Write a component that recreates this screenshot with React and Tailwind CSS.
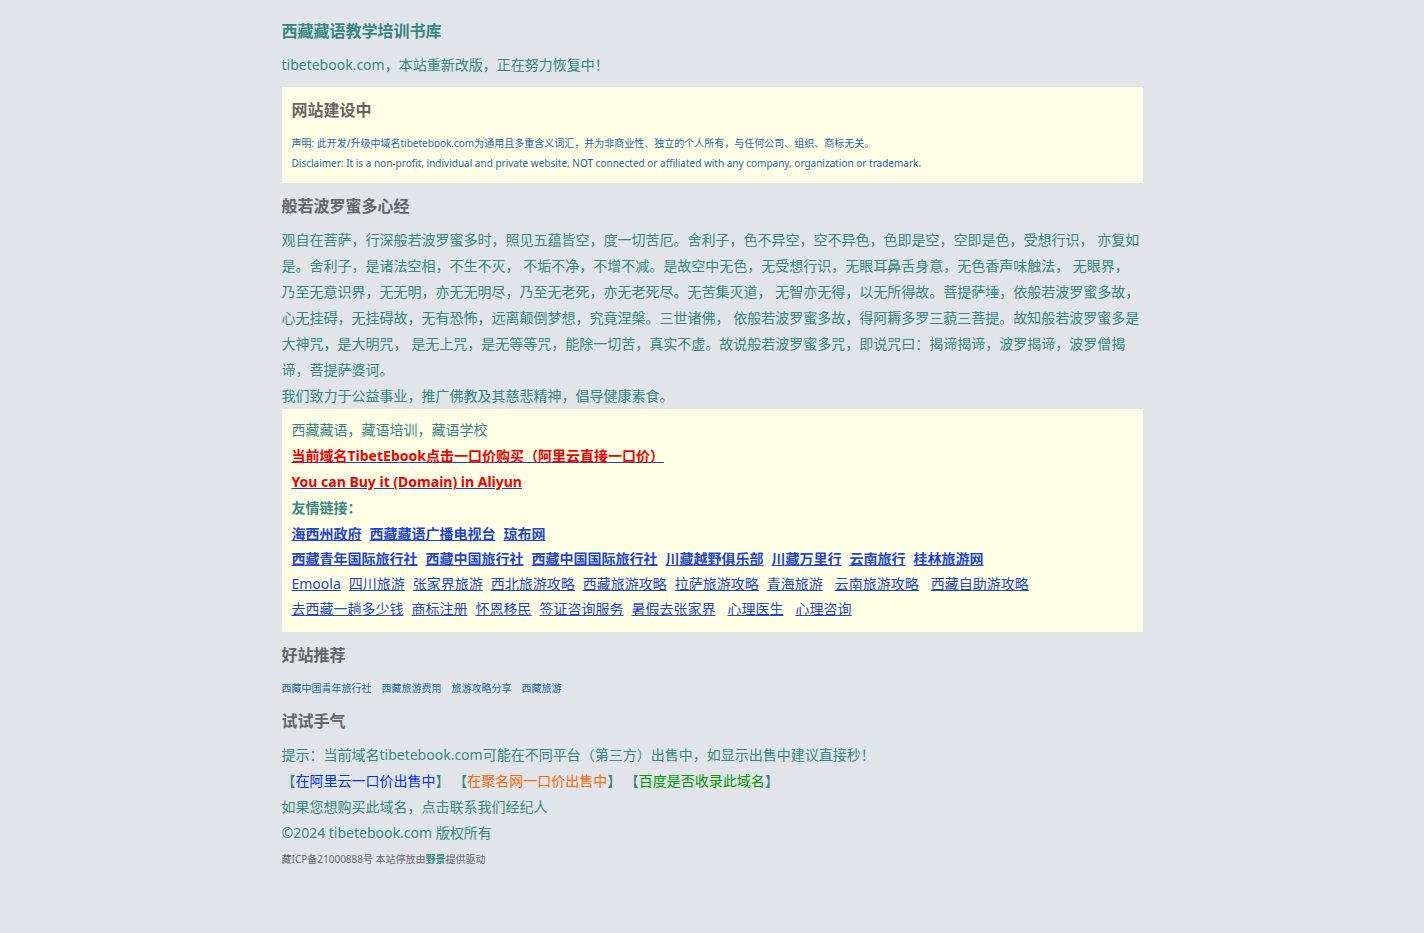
const boldLinks = [
  ['海西州政府', '西藏藏语广播电视台', '琼布网'],
  ['西藏青年国际旅行社', '西藏中国旅行社', '西藏中国国际旅行社', '川藏越野俱乐部', '川藏万里行', '云南旅行', '桂林旅游网'],
];

const links = [
  [
    { name: 'Emoola' },
    { name: '四川旅游' },
    { name: '张家界旅游' },
    { name: '西北旅游攻略' },
    { name: '西藏旅游攻略' },
    { name: '拉萨旅游攻略' },
    { name: '青海旅游' },
    { name: '云南旅游攻略', wide: true },
    { name: '西藏自助游攻略', wide: true },
  ],
  [
    { name: '去西藏一趟多少钱' },
    { name: '商标注册' },
    { name: '怀恩移民' },
    { name: '签证咨询服务' },
    { name: '暑假去张家界' },
    { name: '心理医生', wide: true },
    { name: '心理咨询', wide: true },
  ],
];

const goodSites = ['西藏中国青年旅行社', '西藏旅游费用', '旅游攻略分享', '西藏旅游'];

function Heading({ children }) {
  return <h2 className="text-base leading-[26px] font-bold text-[#666]">{children}</h2>;
}

export default function App() {
  return (
    <div className="min-h-screen bg-[#e1e5ea] font-['Noto_Sans','Noto_Sans_CJK_SC',sans-serif] text-sm leading-[26px] text-[#378782] [text-spacing-trim:space-all]">
      <main className="mx-auto max-w-[861px] pt-[18px] pb-12">
        <h1 className="text-base leading-[26px] font-bold">西藏藏语教学培训书库</h1>
        <p className="mt-2">tibetebook.com，本站重新改版，正在努力恢复中！</p>

        <section className="mt-[9px] bg-[#ffffe5] p-[10px]">
          <Heading>网站建设中</Heading>
          <p className="mt-[10px] text-[10px] leading-5 text-[#2265a5]">
            声明: 此开发/升级中域名tibetebook.com为通用且多重含义词汇，并为非商业性、独立的个人所有，与任何公司、组织、商标无关。
            <br />
            Disclaimer: It is a non-profit, individual and private website, NOT connected or affiliated with any company, organization or trademark.
          </p>
        </section>

        <section className="mt-[10px]">
          <Heading>般若波罗蜜多心经</Heading>
          <p className="mt-2">
            观自在菩萨，行深般若波罗蜜多时，照见五蕴皆空，度一切苦厄。舍利子，色不异空，空不异色，色即是空，空即是色，受想行识，
            亦复如是。舍利子，是诸法空相，不生不灭， 不垢不净，不增不减。是故空中无色，无受想行识，无眼耳鼻舌身意，无色香声味触法，
            无眼界，
            <br />
            乃至无意识界，无无明，亦无无明尽，乃至无老死，亦无老死尽。无苦集灭道， 无智亦无得，以无所得故。菩提萨埵，依般若波罗蜜多故，
            心无挂碍，无挂碍故，无有恐怖，远离颠倒梦想，究竟涅槃。三世诸佛， 依般若波罗蜜多故，得阿耨多罗三藐三菩提。故知般若波罗蜜多是大神咒，是大明咒，
            是无上咒，是无等等咒，能除一切苦，真实不虚。故说般若波罗蜜多咒，即说咒曰：揭谛揭谛，波罗揭谛，波罗僧揭谛，菩提萨婆诃。
          </p>
          <p>我们致力于公益事业，推广佛教及其慈悲精神，倡导健康素食。</p>
        </section>

        <section className="bg-[#ffffe5] px-[10px] pt-2 pb-[11px]">
          <p>西藏藏语，藏语培训，藏语学校</p>
          <p className="font-bold">
            <a href="#aliyun" className="text-[#1d3fc4] underline">
              <span className="text-[#f00000]">当前域名TibetEbook点击一口价购买（阿里云直接一口价）</span>
            </a>
          </p>
          <p className="font-bold">
            <a href="#aliyun" className="text-[#1d3fc4] underline">
              <span className="text-[#f00000]">You can Buy it (Domain) in Aliyun</span>
            </a>
          </p>
          <p className="font-bold">友情链接：</p>
          {boldLinks.map((row) => (
            <nav key={row[0]} className="flex flex-wrap gap-x-2 leading-[25px] font-bold text-[#1f45d8]">
              {row.map((name) => (
                <a key={name} href="#link" className="underline">{name}</a>
              ))}
            </nav>
          ))}
          {links.map((row) => (
            <nav key={row[0].name} className="flex flex-wrap gap-x-2 leading-[25px] text-[#1f45c8]">
              {row.map((link) => (
                <a key={link.name} href="#link" className={link.wide ? 'ml-1 underline' : 'underline'}>
                  {link.name}
                </a>
              ))}
            </nav>
          ))}
        </section>

        <section className="mt-[10px]">
          <Heading>好站推荐</Heading>
          <nav className="mt-[10px] flex flex-wrap gap-x-[10px] text-[10px] leading-5 text-[#2265a5]">
            {goodSites.map((name) => (
              <a key={name} href="#site">{name}</a>
            ))}
          </nav>
        </section>

        <section className="mt-[10px]">
          <Heading>试试手气</Heading>
          <p className="mt-2">提示：当前域名tibetebook.com可能在不同平台（第三方）出售中，如显示出售中建议直接秒！</p>
          <p>
            【<a href="#aliyun" className="text-[#0033ff]">在阿里云一口价出售中</a>】{' '}
            【<a href="#juming" className="text-[#ff6600]">在聚名网一口价出售中</a>】{' '}
            【<a href="#baidu" className="text-[#009900]">百度是否收录此域名</a>】
          </p>
          <p><a href="#contact">如果您想购买此域名，点击联系我们经纪人</a></p>
        </section>

        <footer>
          <p>©2024 tibetebook.com 版权所有</p>
          <p className="text-[10px] text-[#666]">
            藏ICP备21000888号 本站停放由<a href="#yejing" className="font-bold text-[#378782]">野景</a>提供驱动
          </p>
        </footer>
      </main>
    </div>
  );
}
